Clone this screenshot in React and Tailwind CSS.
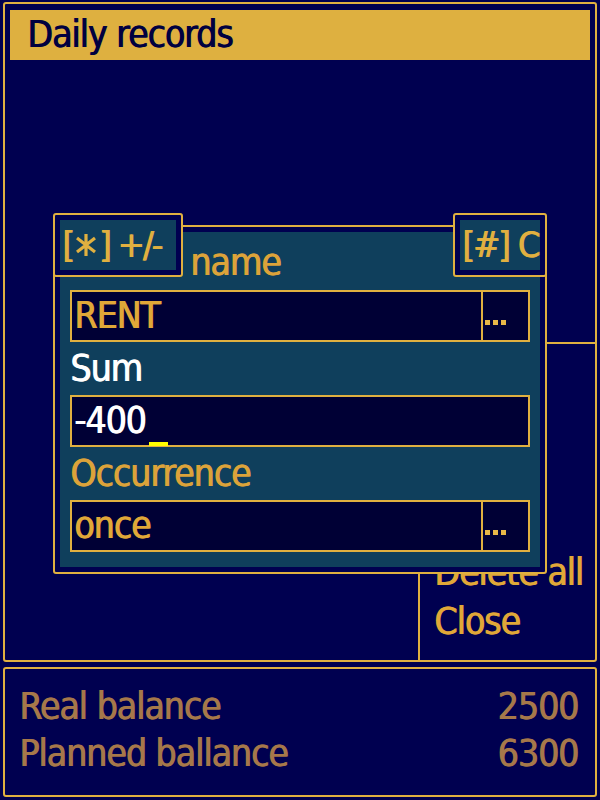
const gold = "border-[#e0b040]";

const Asterisk = () => (
    <svg width="24" height="28" viewBox="0 0 24 28" className="mx-[1px]">
        <path d="M12 3 V25 M3 7 L21 21 M21 7 L3 21" stroke="#e0b040" strokeWidth="3.2" fill="none" />
    </svg>
);

const Dots = () => (
    <div className="w-[47px] h-full border-l-2 border-[#e0b040] flex items-end gap-[3px] pl-[2px] pb-[15px]">
        <span className="w-[5px] h-[5px] bg-[#e8b848]" />
        <span className="w-[5px] h-[5px] bg-[#e8b848]" />
        <span className="w-[5px] h-[5px] bg-[#e8b848]" />
    </div>
);

const Field = ({ value, color, picker, cursor }) => (
    <div className={`h-[52px] border-2 ${gold} bg-[#000035] flex items-center`}>
        <div className={`flex-1 h-full flex items-center pl-[2px] ${color}`}>
            <span>{value}</span>
            {cursor && <span className="self-end w-[19px] h-[4px] ml-[3px] mb-[-1px] bg-[#ffff00]" />}
        </div>
        {picker && <Dots />}
    </div>
);

const SoftKey = ({ children, className }) => (
    <div className={`absolute top-[213px] h-[64px] border-2 ${gold} bg-[#000050] p-[5px] rounded-[3px] ${className}`}>
        <div className="h-full bg-[#0f3f5c] flex items-center pl-[2px] text-[36px] tracking-[-2px] text-[#e0b040]">{children}</div>
    </div>
);

export default function App() {
    return (
        <div className="relative w-[600px] h-[800px] overflow-hidden bg-[#000050] text-[37px] tracking-[-1px] [text-shadow:1px_0_0_currentColor] [font-family:'DejaVu_Sans_Condensed','Liberation_Sans_Narrow','DejaVu_Sans',sans-serif]">
            {/* main window */}
            <div className={`ml-[3px] mt-[2px] w-[594px] h-[660px] border-2 ${gold} rounded-[3px]`}>
                <div className="mx-[5px] mt-[6px] h-[50px] bg-[#deb040] flex items-center pl-[17px] text-[#000040]">
                    Daily records
                </div>
            </div>

            {/* balances */}
            <div className={`ml-[3px] mt-[5px] w-[594px] h-[130px] border-2 ${gold} rounded-[3px] pt-[14px] pl-[14px] pr-[17px] leading-[47px] text-[#a6784a]`}>
                <div className="flex justify-between">
                    <span>Real balance</span>
                    <span>2500</span>
                </div>
                <div className="flex justify-between">
                    <span>Planned ballance</span>
                    <span>6300</span>
                </div>
            </div>

            {/* options menu */}
            <div className={`absolute left-[418px] top-[342px] w-[179px] h-[320px] border-l-2 border-t-2 ${gold} rounded-tl-[3px] flex flex-col justify-end pl-[14px] pb-[16px] leading-[49px] text-[#e0a838]`}>
                <div>Delete all</div>
                <div>Close</div>
            </div>

            {/* edit dialog */}
            <div className={`absolute left-[53px] top-[225px] w-[494px] h-[349px] border-2 ${gold} bg-[#000050] p-[5px] rounded-[3px]`}>
                <div className="h-full bg-[#0f3f5c] px-[10px]">
                    <div className="h-[58px] flex items-center pt-[4px] pl-[120px] text-[#dca33a]">name</div>
                    <Field value="RENT" color="text-[#e0a838]" picker />
                    <div className="h-[53px] flex items-center text-white">Sum</div>
                    <Field value="-400" color="text-white" cursor />
                    <div className="h-[53px] flex items-center text-[#dca33a]">Occurrence</div>
                    <Field value="once" color="text-[#e0a838]" picker />
                </div>
            </div>

            <SoftKey className="left-[53px] w-[130px]">
                <span>[</span>
                <Asterisk />
                <span>]</span>
                <span className="ml-[8px]">+/-</span>
            </SoftKey>
            <SoftKey className="left-[453px] w-[94px]">
                <span>[#]</span>
                <span className="ml-[9px]">C</span>
            </SoftKey>
        </div>
    );
}
